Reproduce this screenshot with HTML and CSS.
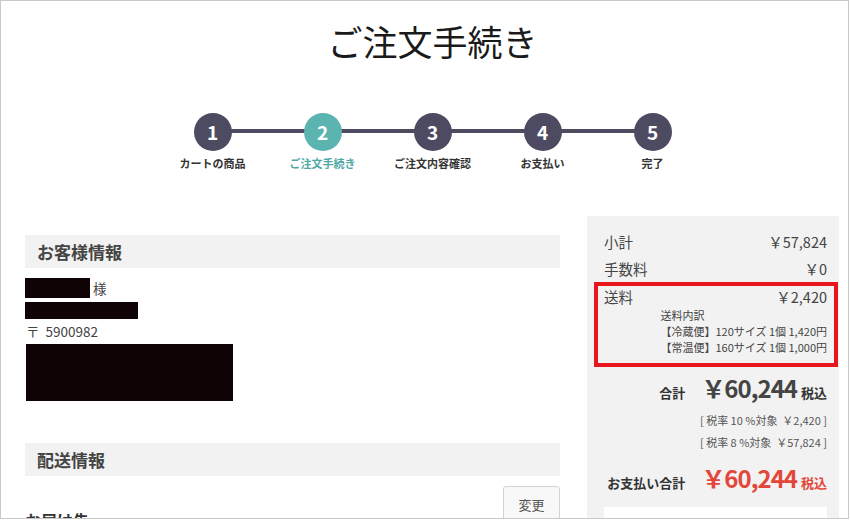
FILE: index.html
```html
<!DOCTYPE html>
<html lang="ja">
<head>
  <meta charset="UTF-8" />
  <meta name="viewport" content="width=device-width, initial-scale=1.0" />
  <title>ご注文手続き</title>
  <link rel="stylesheet" href="styles.css">
</head>
<body>
  <div class="page">
    <div class="wrap">
      <h1 class="page-title">ご注文手続き</h1>

      <ol class="steps">
        <li class="step"><span class="step-num">1</span><span class="step-label">カートの商品</span></li>
        <li class="step is-current"><span class="step-num">2</span><span class="step-label">ご注文手続き</span></li>
        <li class="step"><span class="step-num">3</span><span class="step-label">ご注文内容確認</span></li>
        <li class="step"><span class="step-num">4</span><span class="step-label">お支払い</span></li>
        <li class="step"><span class="step-num">5</span><span class="step-label">完了</span></li>
      </ol>

      <div class="checkout">
        <div class="main-col">
          <section class="block">
            <h2 class="block-title">お客様情報</h2>
            <div class="customer">
              <div class="cust-line"><span class="mask mask-name"></span><span>様</span></div>
              <div class="cust-line"><span class="mask mask-kana"></span></div>
              <div class="cust-line cust-zip">〒&nbsp; 5900982</div>
              <div class="cust-line"><span class="mask mask-address"></span></div>
            </div>
          </section>

          <section class="block block-delivery">
            <h2 class="block-title">配送情報</h2>
            <div class="delivery-head">
              <h3 class="delivery-label">お届け先</h3>
              <button class="btn-change" type="button">変更</button>
            </div>
          </section>
        </div>

        <aside class="summary">
          <div class="sum-row"><span>小計</span><span>￥57,824</span></div>
          <div class="sum-row"><span>手数料</span><span>￥0</span></div>
          <div class="sum-shipping">
            <div class="sum-row"><span>送料</span><span>￥2,420</span></div>
            <div class="ship-detail">
              <div>送料内訳</div>
              <div>【冷蔵便】120サイズ 1個 1,420円</div>
              <div>【常温便】160サイズ 1個 1,000円</div>
            </div>
          </div>

          <div class="sum-total">
            <span class="total-label">合計</span>
            <span class="total-amount">￥60,244</span>
            <span class="total-tax">税込</span>
          </div>
          <div class="tax-line">[ 税率 10 %対象 &nbsp;￥2,420 ]</div>
          <div class="tax-line">[ 税率 8 %対象 &nbsp;￥57,824 ]</div>

          <div class="sum-total sum-pay">
            <span class="total-label">お支払い合計</span>
            <span class="total-amount">￥60,244</span>
            <span class="total-tax">税込</span>
          </div>
          <div class="pay-box"></div>
        </aside>
      </div>
    </div>
  </div>
</body>
</html>
```

FILE: styles.css
```css
body {
  margin: 0;
  font-family: "Noto Sans CJK JP", "Noto Sans", sans-serif;
  color: #444;
  background: #fff;
}
.page {
  width: 849px;
  height: 519px;
  box-sizing: border-box;
  border: 1px solid #c9c9c9;
  overflow: hidden;
}
.wrap {
  margin-left: 24px;
  width: 815px;
}
.page-title {
  margin: 0;
  padding-top: 16px;
  font-size: 35px;
  line-height: 48px;
  font-weight: 400;
  color: #1a1a1a;
  text-align: center;
}

/* progress steps */
.steps {
  list-style: none;
  margin: 48px 0 0;
  padding: 0;
  display: flex;
  justify-content: center;
}
.step {
  position: relative;
  width: 110px;
  display: flex;
  flex-direction: column;
  align-items: center;
}
.step + .step::before {
  content: "";
  position: absolute;
  top: 16px;
  left: -55px;
  width: 110px;
  height: 4px;
  background: #4d4b5f;
}
.step-num {
  position: relative;
  z-index: 1;
  width: 38px;
  height: 38px;
  border-radius: 50%;
  background: #4d4b61;
  color: #fff;
  font-size: 19px;
  font-weight: 700;
  line-height: 38px;
  text-align: center;
}
.step-label {
  margin-top: 4px;
  font-size: 11px;
  font-weight: 700;
  line-height: 16px;
  color: #333;
  white-space: nowrap;
}
.is-current .step-num {
  background: #5cb4b1;
}
.is-current .step-label {
  color: #4fa9a6;
}

/* two columns */
.checkout {
  margin-top: 45px;
  display: grid;
  grid-template-columns: 535px 252px;
  column-gap: 27px;
  align-items: start;
}
.main-col {
  padding-top: 19px;
}
.block-title {
  margin: 0;
  height: 33px;
  padding-left: 12px;
  background: #f2f2f2;
  font-size: 17px;
  font-weight: 700;
  line-height: 33px;
  color: #444;
}
.customer {
  padding-top: 10px;
  font-size: 13.5px;
  color: #444;
}
.cust-line {
  display: flex;
  align-items: center;
  gap: 3px;
  margin-bottom: 4px;
  min-height: 16px;
}
.cust-zip {
  padding-left: 1px;
  margin-top: -2px;
  margin-bottom: 3px;
}
.mask {
  display: inline-block;
  background: #100306;
}
.mask-name {
  width: 65px;
  height: 20px;
}
.mask-kana {
  width: 113px;
  height: 17px;
}
.mask-address {
  width: 207px;
  height: 57px;
  margin-left: 1px;
}
.block-delivery {
  margin-top: 42px;
}
.delivery-head {
  display: flex;
  justify-content: space-between;
  align-items: flex-start;
  padding-top: 10px;
}
.delivery-label {
  margin: 24px 0 0;
  font-size: 16px;
  font-weight: 700;
  line-height: 20px;
  color: #333;
}
.btn-change {
  width: 57px;
  height: 36px;
  border: 1px solid #d3d3d3;
  border-radius: 3px;
  background: #f8f8f8;
  font-family: inherit;
  font-size: 13px;
  color: #555;
}

/* order summary */
.summary {
  background: #f2f2f2;
  padding: 16px 12px 40px 17px;
  min-height: 320px;
}
.sum-row {
  display: flex;
  justify-content: space-between;
  font-size: 14.5px;
  line-height: 20px;
  color: #444;
}
.sum-row + .sum-row {
  margin-top: 7px;
}
.sum-shipping {
  margin: 3px -11px 0 -10px;
  padding: 1px 7px 8px 6px;
  border: 4px solid #e8161d;
}
.ship-detail {
  width: fit-content;
  margin-left: auto;
  font-size: 11px;
  line-height: 16px;
  color: #444;
}
.sum-total {
  margin-top: 5px;
  display: flex;
  justify-content: flex-end;
  align-items: baseline;
  line-height: 32px;
  white-space: nowrap;
}
.total-label {
  font-size: 13px;
  font-weight: 700;
  color: #333;
}
.total-amount {
  margin: 0 4px 0 16px;
  font-size: 24px;
  font-weight: 700;
  letter-spacing: -1px;
  color: #444;
}
.total-tax {
  font-size: 13px;
  font-weight: 700;
  color: #333;
}
.tax-line {
  text-align: right;
  font-size: 11px;
  line-height: 22px;
  color: #555;
}
.tax-line:first-of-type {
  margin-top: 3px;
}
.sum-pay {
  margin-top: 9px;
}
.sum-pay .total-amount,
.sum-pay .total-tax {
  color: #e3473a;
}
.pay-box {
  margin-top: 8px;
  height: 60px;
  background: #fff;
}
```
